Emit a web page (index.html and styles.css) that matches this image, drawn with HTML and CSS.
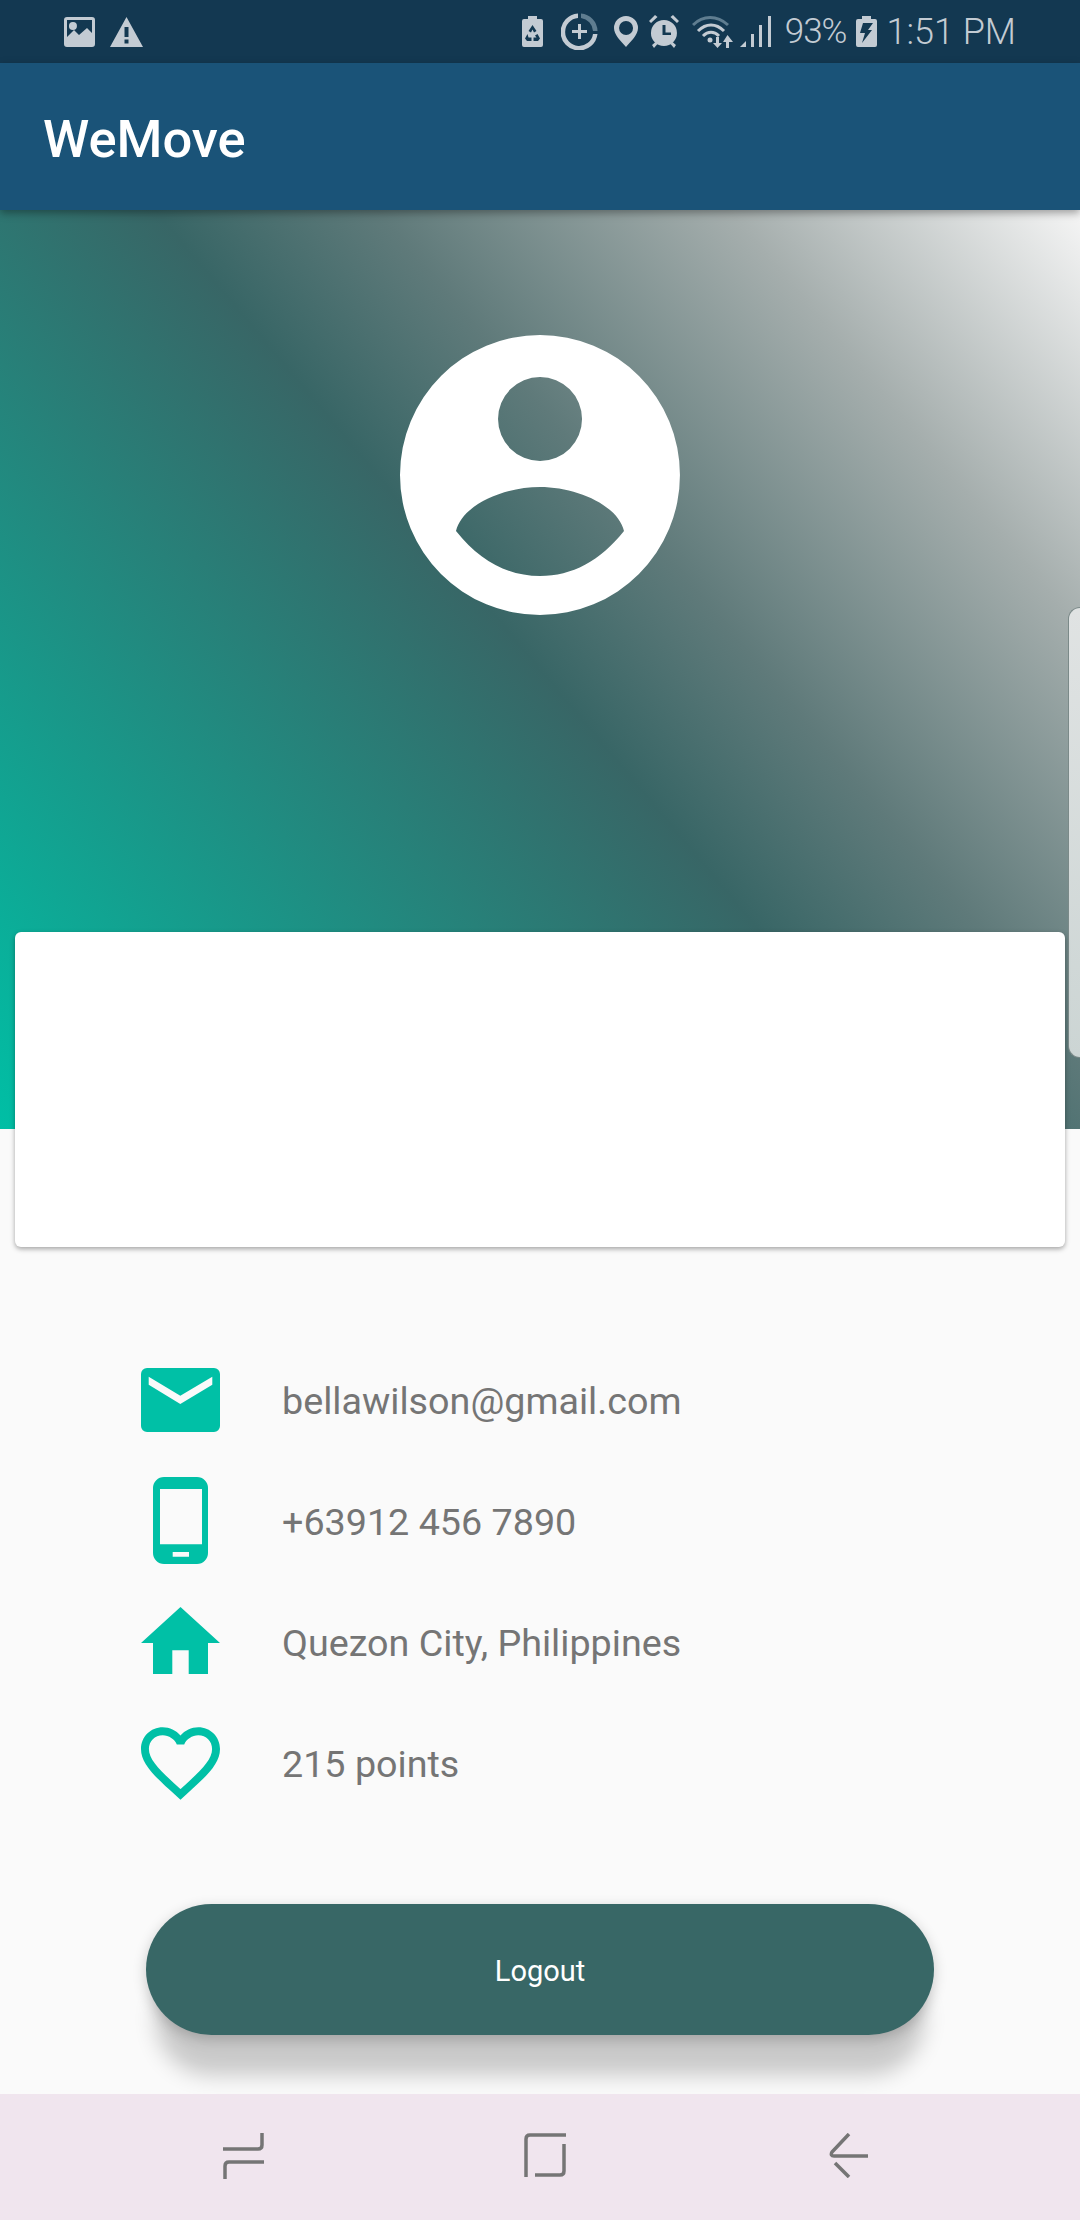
FILE: index.html
```html
<!DOCTYPE html>
<html lang="en">
  <head>
    <meta charset="UTF-8" />
    <meta name="viewport" content="width=device-width, initial-scale=1.0" />
    <title>WeMove</title>
    <link rel="stylesheet" href="styles.css">
  </head>
  <body>
    <div class="status-bar">
      <div class="status-left">
        <svg class="st-image" viewBox="0 0 31 30">
          <path fill-rule="evenodd" d="M3 0H28A3 3 0 0 1 31 3V27A3 3 0 0 1 28 30H3A3 3 0 0 1 0 27V3A3 3 0 0 1 3 0ZM3 3V20L10 13L15 18L23 11L28 16V3ZM9 5A4 4 0 1 1 8.9 13A4 4 0 0 1 9 5Z"/>
        </svg>
        <svg class="st-warn" viewBox="0 0 33 30">
          <path fill-rule="evenodd" d="M16.5 0L33 30H0ZM14.5 10V20H18.5V10ZM14.5 22.5V26.500H18.5V22.500Z"/>
        </svg>
      </div>
      <div class="status-right">
        <svg class="st-batt" viewBox="0 0 21 31">
          <path fill-rule="evenodd" d="M6 0H15V3H19A2 2 0 0 1 21 5V29A2 2 0 0 1 19 31H2A2 2 0 0 1 0 29V5A2 2 0 0 1 2 3H6ZM10.500 9L6.500 15L9 16.500L10.500 13.500L12 16.500L14.500 15ZM5.500 18L3 22.500L5 25H9.500V21.500H6.500ZM15.500 18L13 19.500L14.500 21.500H11.500V25H16L18 22.500Z"/>
        </svg>
        <svg class="st-saver" viewBox="0 0 37 37">
          <path class="dim" d="M20 0.500A18 18 0 0 1 36.500 18H32A14 14 0 0 0 20 5Z"/>
          <path d="M17 0.500V5A14 14 0 1 0 32 21H36.500A18.500 18.500 0 1 1 17 0.500ZM17 11H20V17H26V20H20V26H17V20H11V17H17Z"/>
        </svg>
        <svg class="st-pin" viewBox="0 0 24 31">
          <path fill-rule="evenodd" d="M12 0A12 12 0 0 1 24 12C24 19 17 25 12 31C7 25 0 19 0 12A12 12 0 0 1 12 0ZM12 5A7 7 0 1 0 12.100 19A7 7 0 0 0 12 5Z"/>
        </svg>
        <svg class="st-alarm" viewBox="0 0 30 33">
          <path fill-rule="evenodd" d="M15 5A13 13 0 1 1 14.900 31A13 13 0 0 1 15 5ZM13.500 10V20H22V17.500H16.500V10Z"/>
          <path d="M0 6L6 0L8.500 2L2 8ZM30 6L24 0L21.500 2L28 8ZM3 30L6.500 27L8.500 29L5 33ZM27 30L23.500 27L21.500 29L25 33Z"/>
        </svg>
        <svg class="st-wifi" viewBox="0 0 41 32">
          <path class="dim-line" d="M1 9C11 -1 25 -1 36 9"/>
          <path class="line" d="M6 15C14 7 24 7 32 15"/>
          <path class="line" d="M11 20C16 15 22 15 27 20"/>
          <circle cx="18" cy="24" r="2.500"/>
          <path d="M24 21H27V27H30L25.500 32L21 27H24ZM34 32H37V26H41L35.500 19L31 26H34Z"/>
        </svg>
        <svg class="st-signal" viewBox="0 0 31 31">
          <path d="M0 31L6 25V31Z"/>
          <path d="M11 31V18H14V31ZM19 31V9H22V31ZM28 31V0H31V31Z"/>
        </svg>
        <span class="st-pct">93%</span>
        <svg class="st-charge" viewBox="0 0 21 31">
          <path d="M6 0H15V3H19A2 2 0 0 1 21 5V29A2 2 0 0 1 19 31H2A2 2 0 0 1 0 29V5A2 2 0 0 1 2 3H6Z"/>
          <path class="bolt" d="M7 7H17L12 14H16L6 27L9 17H4Z"/>
        </svg>
        <span class="st-time">1:51 PM</span>
      </div>
    </div>

    <header class="app-bar">
      <h1>WeMove</h1>
    </header>

    <section class="hero">
      <svg class="avatar" viewBox="0 0 280 280">
        <path fill-rule="evenodd" d="M140 0A140 140 0 1 1 139.900 280A140 140 0 0 1 140 0ZM140 42A42 42 0 1 0 140.100 126A42 42 0 0 0 140 42ZM56 196C80 226 108 241 140 241C172 241 200 226 224 196C218 170 176 152 140 152C104 152 62 170 56 196Z"/>
      </svg>
      <div class="edge-handle"></div>
    </section>

    <div class="card"></div>

    <ul class="info-list">
      <li class="info-row">
        <svg class="icon-mail" viewBox="0 0 79 64">
          <path fill-rule="evenodd" d="M6 0H73A6 6 0 0 1 79 6V58A6 6 0 0 1 73 64H6A6 6 0 0 1 0 58V6A6 6 0 0 1 6 0ZM7.700 8.700V16.700L39.300 36L71.300 16.700V8.700L39.300 27.700Z"/>
        </svg>
        <span>bellawilson@gmail.com</span>
      </li>
      <li class="info-row">
        <svg class="icon-phone" viewBox="0 0 55 87">
          <path fill-rule="evenodd" d="M11 0H44A11 11 0 0 1 55 11V76A11 11 0 0 1 44 87H11A11 11 0 0 1 0 76V11A11 11 0 0 1 11 0ZM7 12V67.300H49V12ZM19.700 75V79.700H36V75Z"/>
        </svg>
        <span>+63912 456 7890</span>
      </li>
      <li class="info-row">
        <svg class="icon-home" viewBox="0 0 79 67">
          <path d="M39.500 0L79 36H67V67H47.700V43.300H31.300V67H12V36H0Z"/>
        </svg>
        <span>Quezon City, Philippines</span>
      </li>
      <li class="info-row">
        <svg class="icon-heart" viewBox="2 3 20 18.350">
          <path d="M16.500 3c-1.740 0-3.410.81-4.500 2.090C10.910 3.810 9.240 3 7.500 3 4.420 3 2 5.420 2 8.500c0 3.780 3.400 6.860 8.550 11.540L12 21.350l1.450-1.320C18.600 15.360 22 12.280 22 8.500 22 5.420 19.580 3 16.500 3zm-4.400 15.550l-.1.100-.1-.1C7.140 14.240 4 11.390 4 8.500 4 6.500 5.500 5 7.500 5c1.540 0 3.040.99 3.570 2.360h1.870C13.460 5.990 14.960 5 16.500 5c2 0 3.500 1.500 3.500 3.500 0 2.890-3.140 5.740-7.900 10.050z"/>
        </svg>
        <span>215 points</span>
      </li>
    </ul>

    <button type="button" class="logout">Logout</button>

    <nav class="nav-bar">
      <svg class="nav-recent" viewBox="0 0 41 46">
        <path d="M39 0V12Q39 16 35 16H0"/>
        <path d="M41 29H6Q2 29 2 33V46"/>
      </svg>
      <svg class="nav-home" viewBox="0 0 42 44">
        <path d="M2 44V6Q2 2 6 2H42"/>
        <path d="M40 11V38Q40 42 36 42H11"/>
      </svg>
      <svg class="nav-back" viewBox="0 0 39 45">
        <path d="M20 1L3 19Q1 23 5 23H39"/>
        <path d="M6 30L20 44"/>
      </svg>
    </nav>
  </body>
</html>
```

FILE: styles.css
```css
body {
  font-family: "Roboto", sans-serif;
  background-color: #fafafa;
  margin: 0;
  width: 1080px;
  height: 2220px;
  overflow: hidden;
  display: flex;
  flex-direction: column;
}

/* status bar */
.status-bar {
  height: 63px;
  flex-shrink: 0;
  background-color: #133851;
  color: #c3cbd3;
  display: flex;
  justify-content: space-between;
  align-items: center;
  padding: 0 64px 0 64px;
  box-sizing: border-box;
}

.status-bar svg {
  fill: #c3cbd3;
  display: block;
}

.status-left,
.status-right {
  display: flex;
  align-items: center;
}

.status-left {
  gap: 15px;
}

.st-image {
  width: 31px;
  height: 30px;
}

.st-warn {
  width: 33px;
  height: 30px;
}

.st-batt,
.st-charge {
  width: 21px;
  height: 31px;
}

.st-saver {
  width: 37px;
  height: 37px;
  margin-left: 18px;
}

.st-pin {
  width: 24px;
  height: 31px;
  margin-left: 16px;
}

.st-alarm {
  width: 30px;
  height: 33px;
  margin-left: 11px;
}

.st-wifi {
  width: 41px;
  height: 32px;
  margin-left: 13px;
}

.st-signal {
  width: 31px;
  height: 31px;
  margin-left: 7px;
}

.st-charge {
  margin-left: 10px;
}

.status-bar .dim {
  fill: #5f7d90;
}

.status-bar .bolt {
  fill: #133851;
}

.status-bar .line,
.status-bar .dim-line {
  fill: none;
  stroke: #c3cbd3;
  stroke-width: 3;
}

.status-bar .dim-line {
  stroke: #5f7d90;
}

.st-pct,
.st-time {
  font-size: 36px;
  font-weight: 300;
  line-height: 1;
}

.st-pct {
  margin-left: 14px;
  font-size: 35px;
  letter-spacing: -1px;
}

.st-time {
  margin-left: 9px;
}

/* app bar */
.app-bar {
  height: 147px;
  flex-shrink: 0;
  background-color: #1a5378;
  padding: 4px 0 0 43px;
  box-sizing: border-box;
  display: flex;
  align-items: center;
  position: relative;
  z-index: 2;
  box-shadow: 0 3px 8px rgba(0, 0, 0, 0.35);
}

.app-bar h1 {
  margin: 0;
  font-size: 52.5px;
  font-weight: 500;
  color: #fff;
}

/* hero */
.hero {
  height: 919px;
  flex-shrink: 0;
  position: relative;
  background: linear-gradient(50deg, #00bfa5 0%, #386666 50%, #5f7a7a 62%, #a5aead 81%, #f5f5f5 100%);
  display: flex;
  justify-content: center;
  padding-top: 125px;
  box-sizing: border-box;
}

.avatar {
  width: 280px;
  height: 280px;
  fill: #fff;
}

.edge-handle {
  position: absolute;
  right: 0;
  top: 397px;
  width: 12px;
  height: 451px;
  box-sizing: border-box;
  background: linear-gradient(#e0e3e3, #ccd5d4);
  border: 1px solid #7b8a89;
  border-right: none;
  border-radius: 14px 0 0 14px;
}

.card {
  height: 315px;
  flex-shrink: 0;
  margin: -197px 15px 0;
  background-color: #fff;
  border-radius: 6px;
  box-shadow: 0 2px 5px rgba(0, 0, 0, 0.35);
  position: relative;
}

/* info rows */
.info-list {
  list-style: none;
  margin: 93px 0 0;
  padding: 0 0 0 141px;
}

.info-row {
  height: 121px;
  display: flex;
  align-items: center;
  font-size: 37.7px;
  color: #757575;
}

.info-row svg {
  width: 79px;
  margin-right: 62px;
  fill: #00c0a6;
  flex-shrink: 0;
}

.icon-mail {
  height: 64px;
  margin-bottom: 2px;
}

.icon-phone {
  height: 87px;
  margin-bottom: 2px;
}

.icon-home {
  height: 67px;
  margin-bottom: 4px;
}

.icon-heart {
  height: 73px;
}

/* logout */
.logout {
  display: block;
  width: 788px;
  height: 131px;
  flex-shrink: 0;
  margin: 80px 0 0 146px;
  padding-top: 3px;
  background-color: #386766;
  color: #fff;
  font-family: "Roboto", sans-serif;
  font-size: 29px;
  border: none;
  border-radius: 66px;
  box-shadow: 0 50px 22px -10px rgba(0, 0, 0, 0.2), 0 4px 14px rgba(0, 0, 0, 0.2);
}

/* bottom nav */
.nav-bar {
  height: 126px;
  flex-shrink: 0;
  margin-top: auto;
  background-color: #f0e5ee;
  display: flex;
  align-items: flex-start;
  padding: 39px 0 0 223px;
  box-sizing: border-box;
  position: relative;
}

.nav-bar svg {
  fill: none;
  stroke: #757575;
  stroke-width: 3.5;
  display: block;
}

.nav-recent {
  width: 41px;
  height: 46px;
}

.nav-home {
  width: 42px;
  height: 44px;
  margin-left: 260px;
}

.nav-back {
  width: 39px;
  height: 45px;
  margin-left: 263px;
}
```
